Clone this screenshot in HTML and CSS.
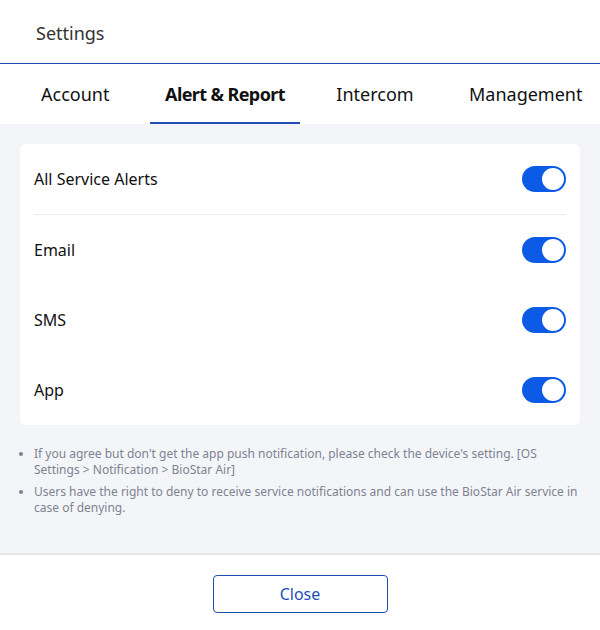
FILE: index.html
```html
<!DOCTYPE html>
<html>
<head>
<meta charset="utf-8">
<link rel="stylesheet" href="styles.css">
</head>
<body>
<div class="dialog">
  <div class="header">Settings</div>
  <div class="tabs">
    <div class="tab tab-account">Account</div>
    <div class="tab tab-alert active">Alert &amp; Report</div>
    <div class="tab tab-intercom">Intercom</div>
    <div class="tab tab-management">Management</div>
  </div>
  <div class="body">
    <div class="card">
      <div class="row row-first">
        <span class="label">All Service Alerts</span>
        <span class="toggle"><span class="knob"></span></span>
      </div>
      <div class="divider"></div>
      <div class="row">
        <span class="label">Email</span>
        <span class="toggle"><span class="knob"></span></span>
      </div>
      <div class="row">
        <span class="label">SMS</span>
        <span class="toggle"><span class="knob"></span></span>
      </div>
      <div class="row">
        <span class="label">App</span>
        <span class="toggle"><span class="knob"></span></span>
      </div>
    </div>
    <ul class="notes">
      <li>If you agree but don't get the app push notification, please check the device's setting. [OS Settings &gt; Notification &gt; BioStar Air]</li>
      <li>Users have the right to deny to receive service notifications and can use the BioStar Air service in case of denying.</li>
    </ul>
  </div>
  <div class="footer">
    <button class="close">Close</button>
  </div>
</div>
</body>
</html>
```
FILE: styles.css
```css
html, body {
  margin: 0;
  padding: 0;
  background: #ffffff;
}
body {
  font-family: "Noto Sans", "Open Sans", sans-serif;
  width: 600px;
  height: 630px;
  overflow: hidden;
}
.dialog {
  display: flex;
  flex-direction: column;
  height: 630px;
}
.header {
  height: 64px;
  box-sizing: border-box;
  padding: 20px 0 0 36px;
  font-size: 18px;
  color: #333333;
  line-height: 26px;
  border-bottom: 1px solid #1d4fb5;
}
.tabs {
  display: flex;
  height: 60px;
  box-sizing: border-box;
}
.tab {
  font-size: 18px;
  color: #111111;
  line-height: 26px;
  padding-top: 17px;
  box-sizing: border-box;
  text-align: center;
}
.tab-account { width: 150px; text-align: left; padding-left: 41px; }
.tab-alert { width: 150px; }
.tab-intercom { width: 150px; }
.tab-management { width: 150px; text-align: left; padding-left: 19px; }
.tab.active {
  font-weight: 700;
  letter-spacing: -0.6px;
  border-bottom: 2px solid #1d4fb5;
}
.body {
  flex: 1;
  background: #f4f5f9;
  padding: 20px 20px 0 20px;
  border-bottom: 2px solid #e6e6e8;
}
.card {
  background: #ffffff;
  border-radius: 6px;
  padding: 0 14px;
}
.row {
  display: flex;
  align-items: center;
  justify-content: space-between;
  height: 70px;
}
.label {
  font-size: 16px;
  color: #111111;
}
.divider {
  height: 1px;
  background: #ececee;
}
.toggle {
  width: 44px;
  height: 26px;
  border-radius: 13px;
  background: #0b5be6;
  display: flex;
  align-items: center;
  justify-content: flex-end;
  padding-right: 2px;
  box-sizing: border-box;
}
.knob {
  width: 22px;
  height: 22px;
  border-radius: 50%;
  background: #ffffff;
}
.notes {
  margin: 21px 0 0 0;
  padding: 0 0 0 14px;
  font-size: 12px;
  line-height: 16px;
  color: #7d8391;
}
.notes li {
  margin-bottom: 6px;
}
.footer {
  height: 75px;
  display: flex;
  justify-content: center;
  align-items: flex-start;
  padding-top: 20px;
  box-sizing: border-box;
}
.close {
  width: 175px;
  height: 38px;
  background: #ffffff;
  border: 1px solid #1d4fb5;
  border-radius: 4px;
  color: #1d4fb5;
  font-family: "Noto Sans", "Open Sans", sans-serif;
  font-size: 16px;
}
```
